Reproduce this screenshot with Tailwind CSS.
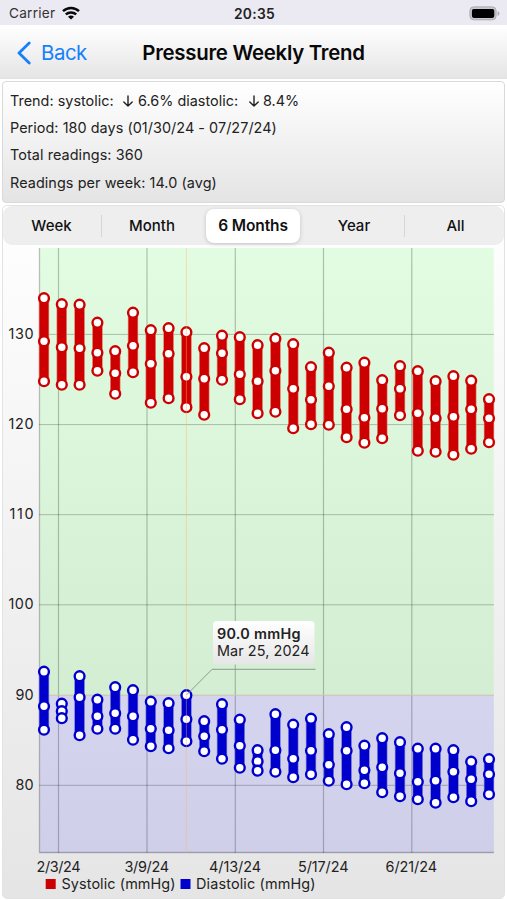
<!DOCTYPE html>
<html lang="en">
<head>
<meta charset="utf-8">
<title>Pressure Weekly Trend</title>
<script src="https://cdn.jsdelivr.net/npm/@tailwindcss/browser@4"></script>
</head>
<body class="w-[507px] h-[900px] overflow-hidden bg-white font-['Inter','Liberation_Sans',sans-serif] text-[#222]">
<div class="flex h-[900px] flex-col">
  <header class="shrink-0">
    <div class="grid h-[25px] grid-cols-3 items-center bg-[#ebe9f1] pl-[9px] pr-[7px] pt-[2px]">
      <div class="flex items-center gap-[6px] text-[13.6px] leading-none text-[#333]">
        <span class="inline-block w-[47px] whitespace-nowrap pt-[1px] tracking-[0.25px]">Carrier</span>
        <svg class="mb-[2px] h-[14px] w-[18px]" viewBox="0 0 18 14" fill="none" stroke="#080808" stroke-width="2.5">
          <path d="M1 5.1C5.6.8 12.4.8 17 5.1"/><path d="M3.8 8.4c3-2.7 7.4-2.7 10.4 0"/><path d="M9 13.6 6 10.7c1.7-1.5 4.3-1.5 6 0z" fill="#080808" stroke="none"/>
        </svg>
      </div>
      <div class="pt-[2px] text-center text-[13.8px] font-semibold leading-none tracking-[0.3px]">20:35</div>
      <svg class="h-[15px] w-[31px] justify-self-end" viewBox="0 0 31 15">
        <rect x=".9" y=".9" width="26.2" height="12.9" rx="3.8" fill="#c9c8cd" stroke="#aaa9af" stroke-width="1"/>
        <rect x="2.9" y="2.9" width="22.4" height="9" rx="1.8"/><path d="M28.6 5.2c2.4.5 2.4 4.1 0 4.6z" fill="#aaa9af"/>
      </svg>
    </div>
    <div class="grid h-[54px] grid-cols-[120px_1fr_120px] items-center border-b border-[#e2e2e2] bg-linear-to-b from-white to-[#e5e5e5] pt-[2px]">
      <div class="flex items-center gap-[10px] pl-[17px] text-[#1680fb]">
        <svg class="h-[24px] w-[14px]" viewBox="0 0 14 24" fill="none" stroke="currentColor" stroke-width="2.8" stroke-linecap="round" stroke-linejoin="round"><path d="M12.2 2 2 12l10.2 10"/></svg>
        <span class="pt-[2px] text-[20.4px] leading-none tracking-[-0.45px]">Back</span>
      </div>
      <h1 class="whitespace-nowrap pt-[1px] text-center text-[20.4px] font-semibold leading-none tracking-[-0.26px] text-[#080808]">Pressure Weekly Trend</h1>
    </div>
  </header>
  <main class="flex flex-col gap-[2px] px-[2px] pt-[2px]">
    <section class="h-[122px] rounded-[4px] border border-[#d9d9d9] bg-linear-to-b from-white to-[#e4e4e4] pl-[7px] pt-[5px] text-[14.4px] leading-[27.2px] tracking-[0.02px]">
      <p class="flex items-center whitespace-nowrap"><span class="w-[112px]">Trend: systolic:</span><svg class="h-[12px] w-[12px]" viewBox="0 0 12 12" fill="none" stroke="#222" stroke-width="1.4" stroke-linecap="round" stroke-linejoin="round"><path d="M6 1v10M1.8 7 6 11l4.2-4"/></svg><span class="w-[112px] pl-[4px]">6.6% diastolic:</span><svg class="ml-[2px] h-[12px] w-[12px]" viewBox="0 0 12 12" fill="none" stroke="#222" stroke-width="1.4" stroke-linecap="round" stroke-linejoin="round"><path d="M6 1v10M1.8 7 6 11l4.2-4"/></svg><span class="pl-[3px]">8.4%</span></p>
      <p class="tracking-[0.05px]">Period: 180 days (01/30/24 - 07/27/24)</p>
      <p class="tracking-[0.08px]">Total readings: 360</p>
      <p class="tracking-[0.08px]">Readings per week: 14.0 (avg)</p>
    </section>
    <section class="h-[694px] overflow-hidden rounded-[5px] border border-[#e3e3e3] bg-linear-to-b from-white to-[#e5e5e5]">
      <nav class="grid h-[39px] grid-cols-[99px_102px_100px_101px_99px] items-center rounded-[9px] bg-[#eeeeef] pt-[1px] text-center text-[15px] font-medium text-[#111]">
        <div class="border-r border-[#d6d6d8] pr-[1px]">Week</div>
        <div class="pr-[2px]">Month</div>
        <div class="ml-[2px] mr-[4px] -mt-[1px] flex h-[34px] items-center justify-center rounded-[8px] bg-white pt-[1px] text-[15.5px] font-semibold tracking-[-0.1px] shadow-[0_1px_4px_rgba(0,0,0,0.18)]">6 Months</div>
        <div class="border-r border-[#d6d6d8]">Year</div>
        <div class="pl-[2px]">All</div>
      </nav>
      <svg id="chart" class="block h-[654px] w-[501px]" viewBox="3 245 501 654" font-family="Inter, 'Liberation Sans', sans-serif" font-size="14.4" fill="#222">
        <rect x="39.5" y="248" width="454.3" height="447" fill="#20f820" fill-opacity=".12"/>
        <rect x="39.5" y="695" width="454.3" height="158" fill="#0000ff" fill-opacity=".1"/>
        <g stroke="#000" stroke-opacity=".24" fill="none">
          <path d="M58.5 248v605M147 248v605M235.3 248v605M323.5 248v605M411.8 248v605" stroke-width="1.2"/>
          <path d="M39 334.4h455M39 424.6h455M39 514.7h455M39 604.8h455M39 785.3h455"/>
          <path d="M39.5 248v605M39 852.5h455" stroke-width="1.3"/>
        </g>
        <path d="M39 695.2h455" stroke="#d2c3ab" fill="none"/>
        <g id="bars"></g>
        <path d="M186.4 248v605" stroke="#ffad66" stroke-opacity=".42" fill="none"/>
        <path d="M187 694.5 212 669.3H315.5" stroke="#8d9a8d" fill="none"/>
        <g text-anchor="end">
          <text x="33.5" y="338.8" textLength="25">130</text>
          <text x="33.5" y="429" textLength="25">120</text>
          <text x="33.5" y="519.2" textLength="24">110</text>
          <text x="33.5" y="609.3" textLength="25">100</text>
          <text x="33.5" y="699.6" textLength="18">90</text>
          <text x="33.5" y="789.8" textLength="18">80</text>
        </g>
        <g>
          <text x="36.5" y="872" textLength="44">2/3/24</text>
          <text x="124.5" y="872" textLength="44.5">3/9/24</text>
          <text x="209" y="872" textLength="52">4/13/24</text>
          <text x="298" y="872" textLength="50.5">5/17/24</text>
          <text x="385.5" y="872" textLength="51.5">6/21/24</text>
          <rect x="45.7" y="879" width="10" height="10" fill="#cc0000"/>
          <text x="61.5" y="889.4" textLength="114">Systolic (mmHg)</text>
          <rect x="180.5" y="879" width="10" height="10" fill="#0000cc"/>
          <text x="196" y="889.4" textLength="119.5">Diastolic (mmHg)</text>
        </g>
        <defs><linearGradient id="tip" x2="0" y2="1"><stop stop-color="#fff"/><stop offset="1" stop-color="#e6e6e6"/></linearGradient></defs>
        <rect x="213" y="621" width="101.5" height="43.5" rx="4" fill="url(#tip)"/>
        <text x="217" y="638.9" font-weight="600" textLength="83.5">90.0 mmHg</text>
        <text x="217" y="656.2" textLength="92.5">Mar 25, 2024</text>
      </svg>
    </section>
  </main>
</div>
<script>
// Each row holds the maximum, average and minimum positions for one week.
const systolic = [[298,341,381],[304,347,384.5],[304.5,348,384.5],[322.5,352.5,370.5],[351,373,393.5],[312.5,345.5,372],[330,363.5,402.5],[328,353.5,398],[332,376.5,407],[348,378.5,414.5],[335.5,353,379.5],[337,374,399],[345,381,413],[338.5,370.5,411.5],[344,388.5,428],[367,399.5,424],[352.5,386,424.5],[367.5,409,437],[362.5,417.5,442.5],[380,408.5,438],[366,388.5,415],[371,413,450.5],[381,418,451.5],[376,416.5,454.5],[380.5,409,448.5],[399,418,442]];
const diastolic = [[671.5,706,729.5],[703.5,711,718],[676,697,735],[699.5,716,728.5],[687,713,728.5],[690,716,739.5],[701.5,728.5,746],[703,730,748],[695,719,741],[721,736,751],[704,729.5,758.5],[719.5,745.5,767.5],[750,761,770.5],[714,750,771.5],[724.5,758.5,777],[718.5,750.5,774],[734,764.5,780.5],[727,750.5,784],[745.5,770,783],[738,767,792],[742,773,796],[748.5,781.5,799],[748.5,780.5,802.5],[750,771.5,797],[761.5,779,801],[759,774,794]];
let out = '';
for (const [rows, color, edge] of [[systolic, '#cc0000', '#e88b78'], [diastolic, '#0000cc', '#8787e2']]) {
  rows.forEach(([top, mid, bottom], i) => {
    const x = 44 + i * 17.8;
    out += `<rect x="${x - 4.9}" y="${top}" width="9.8" height="${bottom - top}" fill="${color}" stroke="${edge}" stroke-width=".6"/>`;
    for (const y of [top, mid, bottom]) out += `<circle cx="${x}" cy="${y + .2}" r="4.9" fill="#fff" stroke="${color}" stroke-width="2.4"/>`;
  });
}
document.getElementById('bars').innerHTML = out;
</script>
</body>
</html>
